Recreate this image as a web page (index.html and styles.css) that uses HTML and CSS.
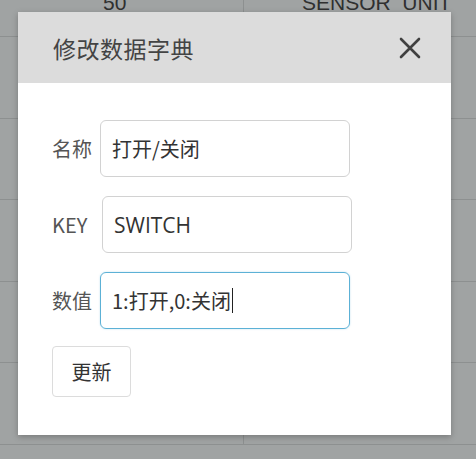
FILE: index.html
```html
<!DOCTYPE html>
<html lang="zh-CN">
<head>
<meta charset="utf-8">
<title>修改数据字典</title>
<link rel="stylesheet" href="styles.css">
</head>
<body>
<div class="table">
  <div class="tr first"><div class="td c1"><span class="cut">50</span></div><div class="td c2"><span class="cut">SENSOR_UNIT</span></div></div>
  <div class="tr"><div class="td c1"></div><div class="td c2"></div></div>
  <div class="tr"><div class="td c1"></div><div class="td c2"></div></div>
  <div class="tr"><div class="td c1"></div><div class="td c2"></div></div>
  <div class="tr"><div class="td c1"></div><div class="td c2"></div></div>
  <div class="tr"><div class="td c1"></div><div class="td c2"></div></div>
</div>

<div class="dialog">
  <div class="header">
    <span class="title">修改数据字典</span>
    <svg class="close" width="24" height="24" viewBox="0 0 24 24"><path d="M3 3 L21 21 M21 3 L3 21" stroke="#404040" stroke-width="2.6" stroke-linecap="round" fill="none"/></svg>
  </div>
  <div class="body">
    <div class="row"><span class="label">名称</span><div class="field">打开/关闭</div></div>
    <div class="row"><span class="label">KEY</span><div class="field key">SWITCH</div></div>
    <div class="row"><span class="label">数值</span><div class="field focus">1:打开,0:关闭<span class="caret"></span></div></div>
    <button class="btn">更新</button>
  </div>
</div>
</body>
</html>
```

FILE: styles.css
```css
html, body {
  margin: 0;
  padding: 0;
}
body {
  width: 476px;
  height: 459px;
  overflow: hidden;
  background: #a0a3a3;
  font-family: "Noto Sans CJK SC", "Noto Sans", sans-serif;
  position: relative;
}
.table {
  display: flex;
  flex-direction: column;
}
.tr {
  display: flex;
  height: 80.6px;
  border-bottom: 1px solid #8d9090;
}
.tr.first {
  height: 36px;
}
.td.c1 {
  width: 244px;
  border-right: 1px solid #8d9090;
  padding-left: 103px;
  box-sizing: border-box;
}
.td.c2 {
  flex: 1;
  padding-left: 58px;
}
.cut {
  display: block;
  font-family: "Liberation Sans", Arial, sans-serif;
  font-size: 21px;
  line-height: 21px;
  color: #2f3030;
  margin-top: -8px;
}
.dialog {
  position: absolute;
  left: 18px;
  top: 12px;
  width: 433px;
  height: 423px;
  background: #fff;
  box-shadow: 0 2px 6px rgba(0,0,0,0.25);
}
.header {
  height: 71px;
  background: #dcdcdc;
  display: flex;
  align-items: center;
  justify-content: space-between;
  padding: 0 29px 0 35px;
}
.title {
  font-size: 23px;
  color: #444;
  letter-spacing: 0.5px;
}
.close {
  display: block;
}
.body {
  padding: 37px 0 0 34px;
}
.row {
  display: flex;
  align-items: center;
  margin-bottom: 19px;
}
.label {
  min-width: 43px;
  margin-right: 5px;
  font-size: 20px;
  color: #555;
}
.field {
  width: 250px;
  height: 57px;
  box-sizing: border-box;
  border: 1px solid #d2d2d2;
  border-radius: 6px;
  padding: 0 11px;
  display: flex;
  align-items: center;
  font-size: 20px;
  color: #333;
}
.field.key {
  margin-left: 2px;
  font-family: "Open Sans", "Noto Sans", sans-serif;
  font-size: 21px;
}
.field.focus {
  border-color: #5cb1d6;
  box-shadow: 0 0 2px rgba(92,177,214,0.4);
}
.caret {
  display: inline-block;
  width: 1.5px;
  height: 25px;
  background: #222;
  margin-left: 1px;
}
.btn {
  display: block;
  width: 79px;
  height: 51px;
  margin-top: -2px;
  background: #fff;
  border: 1px solid #dcdcdc;
  border-radius: 4px;
  font-family: "Noto Sans CJK SC", sans-serif;
  font-size: 20px;
  color: #333;
  padding: 0;
}
```
